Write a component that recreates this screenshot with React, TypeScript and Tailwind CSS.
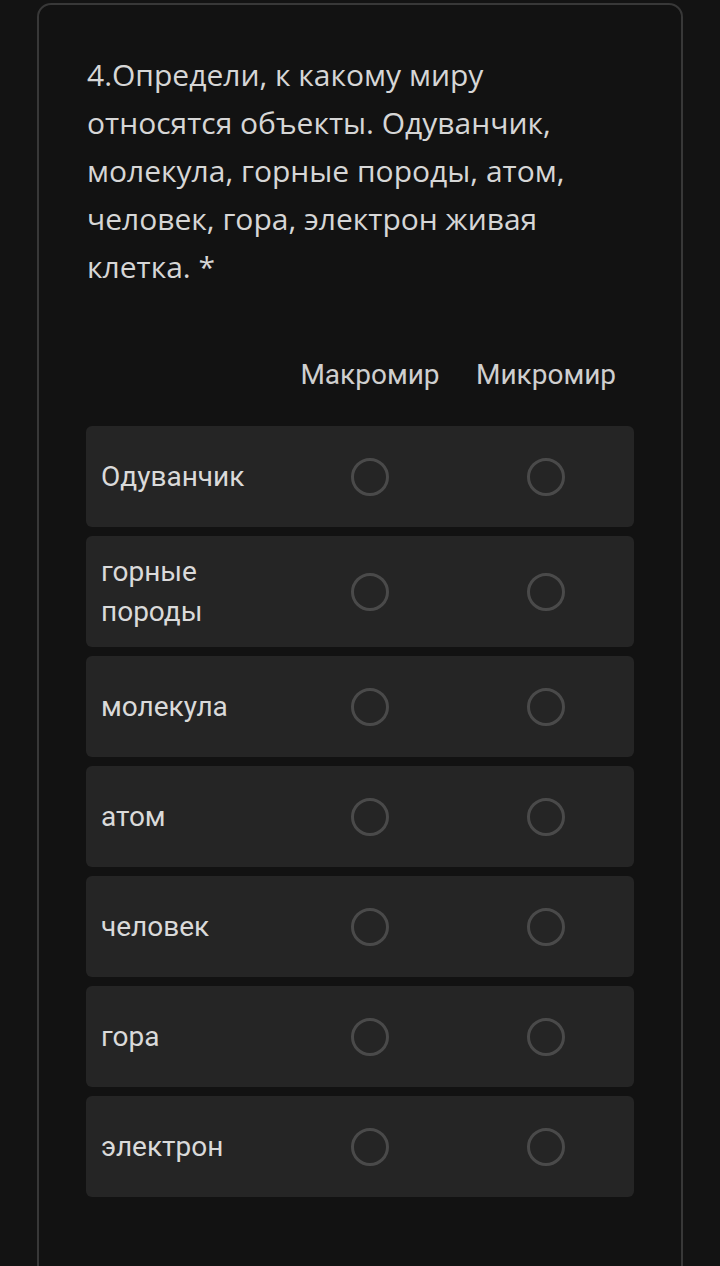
import React from 'react';

const ROWS = ['Одуванчик', 'горные породы', 'молекула', 'атом', 'человек', 'гора', 'электрон'];
const COLS = ['Макромир', 'Микромир'];

function Radio() {
  return <div className="w-[38px] h-[38px] rounded-full border-[3px] border-[#4a4a4a]" />;
}

export default function App() {
  return (
    <div className="w-[720px] h-[1266px] overflow-hidden bg-[#131313] pt-[3px] px-[37px]" style={{ fontFamily: 'Roboto, "Noto Sans", sans-serif' }}>
      <div className="h-[1300px] bg-[#121212] border-2 border-[#383838] rounded-[14px] pt-[46px] px-[47px]">
        {/* Question */}
        <div className="pl-px text-[30px] leading-[48px] text-[#d6d6d6]" style={{ fontFamily: '"Open Sans", Roboto, sans-serif' }}>
          4.Определи, к какому миру<br />
          относятся объекты. Одуванчик,<br />
          молекула, горные породы, атом,<br />
          человек, гора, электрон живая<br />
          клетка. *
        </div>

        {/* Column headers */}
        <div className="grid grid-cols-[196px_176px_176px] mt-[64px] h-[71px] items-start">
          <div />
          {COLS.map((c) => (
            <div key={c} className="text-center text-[28px] leading-[40px] text-[#cfcfcf]">{c}</div>
          ))}
        </div>

        {/* Rows */}
        <div className="flex flex-col gap-[9px]">
          {ROWS.map((r) => (
            <div key={r} className="grid grid-cols-[196px_176px_176px] items-center bg-[#252525] rounded-[6px] min-h-[101px] py-[15.5px]">
              <div className="pl-[15px] pr-[4px] text-[28px] leading-[40px] text-[#dadada]">{r}</div>
              <div className="flex justify-center"><Radio /></div>
              <div className="flex justify-center"><Radio /></div>
            </div>
          ))}
        </div>
      </div>
    </div>
  );
}
